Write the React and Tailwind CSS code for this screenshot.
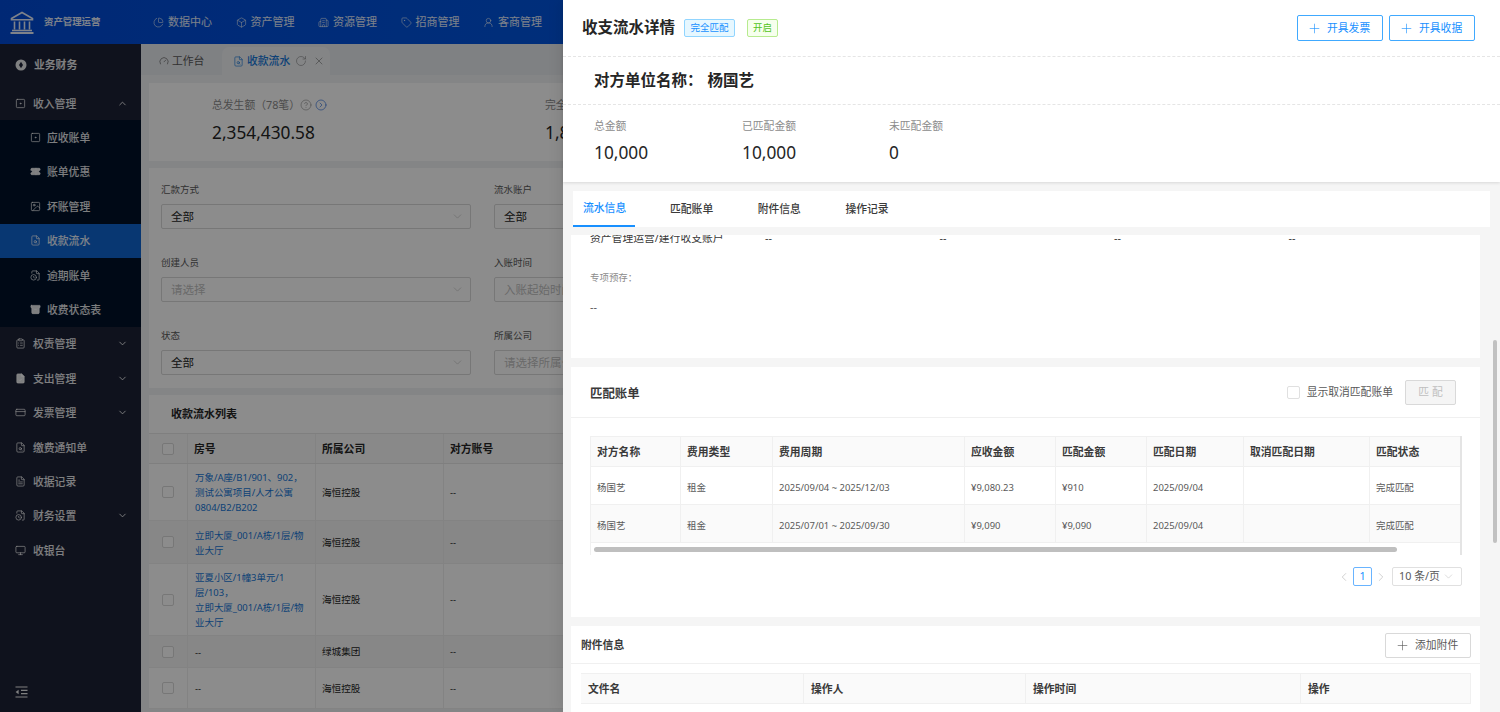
import React from 'react';
import {
  ChartPie, Box, Building2, Tag, UserRound, SquareDot, Ticket, Image as ImageIcon, FileSearch, FileClock, Archive,
  ClipboardList, FileCheck, CreditCard, FileText, Monitor, CircleHelp, CircleChevronRight,
  RotateCw, X, Plus, ChevronUp, ChevronDown, ChevronLeft, ChevronRight, Gauge,
} from 'lucide-react';

const topNav = [
  ['数据中心', ChartPie], ['资产管理', Box], ['资源管理', Building2], ['招商管理', Tag], ['客商管理', UserRound],
];

const Logo = () => (
  <svg width="24" height="24" viewBox="0 0 24 24" fill="none" stroke="currentColor" strokeWidth="1.6">
    <path d="M1.5 8.5 12 2.5l10.5 6v1.2h-21z" />
    <path d="M4.5 11.5v8M9.5 11.5v8M14.5 11.5v8M19.5 11.5v8" />
    <path d="M2 20.5h20" />
    <path d="M0.5 23h23" strokeWidth="2" />
  </svg>
);

const FinanceIcon = ({ className }) => (
  <svg width="12" height="12" viewBox="0 0 12 12" className={className}>
    <circle cx="6" cy="6" r="5.5" fill="currentColor" />
    <path d="M6 2.8 8 6 6 9.2 4 6z" fill="#1d2236" />
  </svg>
);

const CollapseIcon = () => (
  <svg width="13" height="12" viewBox="0 0 13 12" fill="none" stroke="currentColor" strokeWidth="1.2">
    <path d="M0.5 1h12M6 4.3h6.5M6 7.6h6.5M0.5 11h12" />
    <path d="M3.6 3.8v4.4L0.6 6z" fill="currentColor" stroke="none" />
  </svg>
);

function SideRow({ icon: Icon, label, chevron, sub, active, bold, tall, filled }) {
  return (
    <div
      className={`flex items-center ${tall ? 'h-[42px]' : 'h-[34.4px]'} ${sub ? 'pl-[30px]' : 'pl-[15px]'} pr-[13px] ${active ? 'bg-[#1064d0]' : ''} ${bold ? 'font-semibold' : 'font-medium'}`}
    >
      <Icon size={11} strokeWidth={1.6} fill={filled ? 'currentColor' : 'none'} className="shrink-0" />
      <span className={`${sub ? 'ml-[6px]' : 'ml-[7px]'} pt-[1px] text-[10.8px]`}>{label}</span>
      {chevron === 'up' && <ChevronUp size={11} className="ml-auto" />}
      {chevron === 'down' && <ChevronDown size={11} className="ml-auto" />}
    </div>
  );
}

function Sidebar() {
  return (
    <aside className="w-[141px] shrink-0 bg-[#1d2236] text-white/90 flex flex-col relative">
      <SideRow icon={FinanceIcon} label="业务财务" bold tall />
      <SideRow icon={SquareDot} label="收入管理" chevron="up" />
      <div className="bg-[#001129]">
        <SideRow sub icon={SquareDot} label="应收账单" />
        <SideRow sub filled icon={Ticket} label="账单优惠" />
        <SideRow sub icon={ImageIcon} label="坏账管理" />
        <SideRow sub active icon={FileSearch} label="收款流水" />
        <SideRow sub icon={FileClock} label="逾期账单" />
        <SideRow sub filled icon={Archive} label="收费状态表" />
      </div>
      <SideRow icon={ClipboardList} label="权责管理" chevron="down" />
      <SideRow filled icon={FileCheck} label="支出管理" chevron="down" />
      <SideRow icon={CreditCard} label="发票管理" chevron="down" />
      <SideRow icon={FileSearch} label="缴费通知单" />
      <SideRow icon={FileText} label="收据记录" />
      <SideRow icon={FileClock} label="财务设置" chevron="down" />
      <SideRow icon={Monitor} label="收银台" />
      <div className="mt-auto pl-[15px] pb-[14px]">
        <CollapseIcon />
      </div>
    </aside>
  );
}

const Select = ({ value, placeholder }) => (
  <div className="h-[25px] w-[310px] border border-[#d9d9d9] rounded-[2px] bg-white flex items-center pl-[9px] pr-[6px] text-[11.5px]">
    <span className={placeholder ? 'text-[#bfbfbf]' : 'text-[#262626]'}>{value || placeholder}</span>
    <ChevronDown size={13} strokeWidth={1.2} className="ml-auto text-[#bfbfbf]" />
  </div>
);

const Field = ({ label, value, placeholder }) => (
  <div className="w-[310px]">
    <div className="h-[14px] pt-[1px] leading-[14px] text-[9.5px] text-[#595959] mb-[8px]">{label}</div>
    <Select value={value} placeholder={placeholder} />
  </div>
);

const listRows = [
  { h: 'h-[57px]', lines: ['万象/A座/B1/901、902，', '测试公寓项目/人才公寓', '0804/B2/B202'], co: '海恒控股' },
  { h: 'h-[43px]', gray: true, lines: ['立即大厦_001/A栋/1层/物', '业大厅'], co: '海恒控股' },
  { h: 'h-[72px]', lines: ['亚夏小区/1幢3单元/1', '层/103，', '立即大厦_001/A栋/1层/物', '业大厅'], co: '海恒控股' },
  { h: 'h-[32px]', gray: true, plain: true, co: '绿城集团' },
  { h: 'h-[41px]', plain: true, co: '海恒控股' },
];

function Main() {
  return (
    <main className="flex-1 min-w-0 bg-[#f0f2f5] overflow-hidden">
      <div className="h-[31px] bg-[#e8ebef] flex items-end pl-[18px] text-[10.8px] text-[#595959]">
        <div className="h-[28px] flex items-center gap-[3px] w-[63px]">
          <Gauge size={10} strokeWidth={1.5} />
          <span>工作台</span>
        </div>
        <div className="h-[28px] w-[108px] bg-[#f0f2f5] rounded-t-[7px] flex items-center pl-[11px] text-[#1677d8] font-medium">
          <FileSearch size={11} strokeWidth={1.4} />
          <span className="ml-[3px]">收款流水</span>
          <RotateCw size={12} strokeWidth={1.3} className="ml-[5px] text-[#8c8c8c]" />
          <X size={12} strokeWidth={1.5} className="ml-[6px] text-[#8c8c8c]" />
        </div>
      </div>
      <div className="mx-[8px] mt-[8px] h-[78px] bg-white flex pl-[63px] pt-[15px]">
        <div className="w-[333px]">
          <div className="flex items-center h-[14px] text-[10.8px] text-[#8c8c8c]">
            总发生额（78笔）
            <CircleHelp size={12} strokeWidth={1.2} />
            <CircleChevronRight size={12} strokeWidth={1.3} className="ml-[3px] text-[#2f6fdc]" />
          </div>
          <div className="mt-[9px] text-[17.3px] leading-[24px] text-[#262626]">2,354,430.58</div>
        </div>
        <div>
          <div className="h-[14px] leading-[14px] text-[10.8px] text-[#8c8c8c]">完全匹配金额</div>
          <div className="mt-[9px] text-[17.3px] leading-[24px] text-[#262626]">1,854,430.58</div>
        </div>
      </div>
      <div className="mx-[8px] mt-[7px] h-[220px] bg-white pl-[12px] pt-[14px] flex flex-col gap-[26px]">
        <div className="flex gap-[23px]">
          <Field label="汇款方式" value="全部" />
          <Field label="流水账户" value="全部" />
        </div>
        <div className="flex gap-[23px]">
          <Field label="创建人员" placeholder="请选择" />
          <Field label="入账时间" placeholder="入账起始时间" />
        </div>
        <div className="flex gap-[23px]">
          <Field label="状态" value="全部" />
          <Field label="所属公司" placeholder="请选择所属公司" />
        </div>
      </div>
      <div className="mx-[8px] mt-[7px] bg-white">
        <div className="h-[38px] flex items-center pl-[22px] text-[11px] font-semibold text-[#262626]">收款流水列表</div>
        <div className="grid grid-cols-[39px_128px_128px_200px] h-[31px] bg-[#fafafa] border-y border-[#e8e8e8] text-[10.8px] font-semibold text-[#262626]">
          <div className="flex items-center justify-center border-r border-[#eeeeee]">
            <span className="w-[12px] h-[12px] border border-[#d9d9d9] rounded-[2px] bg-white" />
          </div>
          <div className="flex items-center pl-[6px] pt-[1px] border-r border-[#eeeeee]">房号</div>
          <div className="flex items-center pl-[6px] pt-[1px] border-r border-[#eeeeee]">所属公司</div>
          <div className="flex items-center pl-[6px] pt-[1px]">对方账号</div>
        </div>
        {listRows.map((r, i) => (
          <div key={i} className={`grid grid-cols-[39px_128px_128px_200px] ${r.h} border-b border-[#eeeeee] text-[9.45px] text-[#262626] ${r.gray ? 'bg-[#f6f6f6]' : 'bg-white'}`}>
            <div className="flex items-center justify-center border-r border-[#eeeeee]">
              <span className="w-[12px] h-[12px] border border-[#d9d9d9] rounded-[2px] bg-white" />
            </div>
            <div className={`flex flex-col justify-center pl-[7px] pr-[4px] pt-[1px] leading-[15px] border-r border-[#eeeeee] ${r.plain ? 'text-[#262626]' : 'text-[#1677d8]'}`}>
              {r.plain ? <span>--</span> : r.lines.map((l, j) => <span key={j} className="whitespace-nowrap">{l}</span>)}
            </div>
            <div className="flex items-center pl-[6px] pt-[2px] border-r border-[#eeeeee] text-[9.6px]">{r.co}</div>
            <div className="flex items-center pl-[6px] pt-[2px]">--</div>
          </div>
        ))}
      </div>
    </main>
  );
}

const matchCols = ['对方名称', '费用类型', '费用周期', '应收金额', '匹配金额', '匹配日期', '取消匹配日期', '匹配状态'];
const matchRows = [
  ['杨国艺', '租金', '2025/09/04 ~ 2025/12/03', '¥9,080.23', '¥910', '2025/09/04', '', '完成匹配'],
  ['杨国艺', '租金', '2025/07/01 ~ 2025/09/30', '¥9,090', '¥9,090', '2025/09/04', '', '完成匹配'],
];

function MatchTable() {
  const cols = 'grid grid-cols-[90px_92px_192px_91px_91px_97px_126px_92px]';
  return (
    <div className="relative ml-[19px] mr-[18px] mt-[18px] h-[119px] overflow-hidden border-l border-[#f0f0f0]">
      <div className={`${cols} h-[31px] bg-[#fafafa] border-y border-[#f0f0f0] text-[10.8px] font-semibold text-[#3a3a3a]`}>
        {matchCols.map((c, i) => (
          <div key={i} className="flex items-center pl-[6px] pt-[1px] border-r border-[#f0f0f0] whitespace-nowrap">{c}</div>
        ))}
      </div>
      {matchRows.map((r, i) => (
        <div key={i} className={`${cols} h-[38px] border-b border-[#f0f0f0] text-[9.45px] text-[#595959] ${i === 1 ? 'bg-[#fafafa]' : 'bg-white'}`}>
          {r.map((c, j) => (
            <div key={j} className="flex items-center pl-[6px] pt-[5px] border-r border-[#f0f0f0] whitespace-nowrap">{c}</div>
          ))}
        </div>
      ))}
      <div className="absolute right-0 top-0 bottom-0 w-[2px] bg-[#e4e4e4]" />
      <div className="absolute left-[3px] top-[111px] w-[803px] h-[5px] rounded-full bg-[#bfbfbf]" />
    </div>
  );
}

function Drawer() {
  return (
    <section className="absolute right-0 top-0 w-[937px] h-full bg-[#f5f5f5] flex flex-col shadow-[-4px_0_12px_rgba(0,0,0,0.08)]">
      <div className="h-[182px] shrink-0 bg-white shadow-[0_1px_3px_rgba(0,0,0,0.12)]">
        <div className="h-[57px] border-b border-dashed border-[#e5e5e5] flex items-center pl-[19px] pr-[25px]">
          <h1 className="text-[15.5px] font-semibold text-[#262626]">收支流水详情</h1>
          <span className="ml-[9px] h-[18px] w-[51px] flex items-center justify-center rounded-[2px] border border-[#91d5ff] bg-[#e6f7ff] text-[9.5px] text-[#1890ff]">完全匹配</span>
          <span className="ml-[12px] h-[18px] w-[31px] flex items-center justify-center rounded-[2px] border border-[#b7eb8f] bg-[#f6ffed] text-[9.5px] text-[#52c41a]">开启</span>
          <button className="ml-auto h-[26px] w-[86px] flex items-center pl-[9px] gap-[5px] rounded-[2px] border border-[#40a9ff] text-[10.8px] text-[#1890ff]">
            <Plus size={15} strokeWidth={1} />开具发票
          </button>
          <button className="ml-[6px] h-[26px] w-[86px] flex items-center pl-[9px] gap-[5px] rounded-[2px] border border-[#40a9ff] text-[10.8px] text-[#1890ff]">
            <Plus size={15} strokeWidth={1} />开具收据
          </button>
        </div>
        <div className="h-[48px] pt-[1px] border-b border-dashed border-[#e5e5e5] flex items-center pl-[31px] text-[15.5px] font-semibold text-[#262626]">
          <span>对方单位名称：</span>
          <span className="ml-[5px]">杨国艺</span>
        </div>
        <div className="flex pl-[31px] pt-[14px]">
          {[['总金额', '10,000', 'w-[148px]'], ['已匹配金额', '10,000', 'w-[147px]'], ['未匹配金额', '0', 'w-[147px]']].map(([l, v, w]) => (
            <div key={l} className={w}>
              <div className="h-[14px] leading-[14px] text-[10.8px] text-[#8c8c8c]">{l}</div>
              <div className="mt-[7px] text-[17.3px] leading-[26px] text-[#262626]">{v}</div>
            </div>
          ))}
        </div>
      </div>

      <div className="mx-[10px] mt-[9px] h-[36px] shrink-0 bg-white flex text-[10.8px] font-medium text-[#3a3a3a]">
        <div className="w-[62px] pl-[10px] flex items-center border-b-2 border-[#1890ff] text-[#1890ff]">流水信息</div>
        <div className="flex items-center ml-[35px] gap-[44.5px]">
          <span>匹配账单</span><span>附件信息</span><span>操作记录</span>
        </div>
      </div>

      <div className="relative flex-1 min-h-0 mt-[8px] pl-[8px] pr-[20px] overflow-hidden flex flex-col gap-[9px]">
        <div className="h-[123px] shrink-0 bg-white overflow-hidden pl-[19px] text-[10.8px] text-[#3a3a3a]">
          <div className="-mt-[7px] h-[20px] flex items-center">
            <span className="w-[175px] whitespace-nowrap">资产管理运营/建行收支账户</span>
            <span className="w-[174.5px]">--</span>
            <span className="w-[174.5px]">--</span>
            <span className="w-[174.5px]">--</span>
            <span>--</span>
          </div>
          <div className="mt-[23px] h-[14px] leading-[14px] text-[9.45px] text-[#8c8c8c]">专项预存：</div>
          <div className="mt-[15px] h-[14px] leading-[14px] text-[#595959]">--</div>
        </div>

        <div className="h-[250px] shrink-0 bg-white">
          <div className="h-[51px] border-b border-[#f0f0f0] flex items-center pl-[19px] pr-[24px]">
            <span className="pt-[4px] text-[12.4px] font-semibold text-[#3a3a3a]">匹配账单</span>
            <span className="ml-auto w-[13px] h-[13px] border border-[#e0e0e0] rounded-[2px]" />
            <span className="ml-[7px] text-[10.8px] text-[#595959]">显示取消匹配账单</span>
            <button className="ml-[12px] h-[25px] w-[51px] rounded-[2px] border border-[#d9d9d9] bg-[#f5f5f5] text-[10.8px] text-[#bfbfbf]">匹 配</button>
          </div>
          <MatchTable />
          <div className="mt-[12px] pr-[18px] flex items-center justify-end text-[#bfbfbf]">
            <ChevronLeft size={14} strokeWidth={1.2} />
            <span className="ml-[2px] w-[19px] h-[19px] flex items-center justify-center border border-[#69b4ff] rounded-[2px] text-[10.8px] text-[#1890ff]">1</span>
            <ChevronRight size={14} strokeWidth={1.2} className="ml-[2px]" />
            <span className="ml-[4px] w-[70px] h-[19px] flex items-center pl-[6px] pr-[6px] border border-[#e0e0e0] rounded-[2px] text-[10.8px] text-[#595959]">
              10 条/页
              <ChevronDown size={13} strokeWidth={1} className="ml-auto text-[#bfbfbf]" />
            </span>
          </div>
        </div>

        <div className="shrink-0 bg-white">
          <div className="h-[38px] border-b border-[#f0f0f0] flex items-center pl-[10px] pr-[9px]">
            <span className="pt-[2px] text-[10.8px] font-semibold text-[#3a3a3a]">附件信息</span>
            <button className="mt-[1px] ml-auto h-[25px] w-[86px] flex items-center pl-[9px] gap-[5px] rounded-[2px] border border-[#d9d9d9] text-[10.8px] text-[#595959]">
              <Plus size={15} strokeWidth={1} />添加附件
            </button>
          </div>
          <div className="mx-[10px] mt-[9px] mr-[9px] grid grid-cols-[223px_222px_275px_170px] h-[31px] bg-[#fafafa] border-y border-[#f0f0f0] text-[10.8px] font-semibold text-[#3a3a3a]">
            {['文件名', '操作人', '操作时间', '操作'].map((c) => (
              <div key={c} className="flex items-center pl-[7px] pt-[1px] border-r border-[#f0f0f0]">{c}</div>
            ))}
          </div>
          <div className="h-[40px]" />
        </div>
      </div>

      <div className="absolute right-[3px] top-[340px] w-[4px] h-[203px] rounded-full bg-[#c1c1c1]" />
    </section>
  );
}

export default function App() {
  return (
    <div className="relative w-[1500px] h-[712px] overflow-hidden font-['Noto_Sans','Noto_Sans_CJK_SC',sans-serif]">
      <div className="h-full flex flex-col">
        <header className="h-[44px] shrink-0 bg-[linear-gradient(90deg,#004ad6,#0068f0)] text-white/90 flex items-center">
          <div className="w-[153px] shrink-0 flex items-center pl-[10px]">
            <Logo />
            <span className="ml-[10px] text-[9.4px] font-semibold">资产管理运营</span>
          </div>
          <nav className="flex">
            {topNav.map(([label, Icon]) => (
              <div key={label} className="w-[82.5px] flex items-center text-[11px]">
                <Icon size={11} strokeWidth={1.3} className="shrink-0" />
                <span className="ml-[4px]">{label}</span>
              </div>
            ))}
          </nav>
        </header>
        <div className="flex-1 min-h-0 flex">
          <Sidebar />
          <Main />
        </div>
      </div>
      <div className="absolute inset-0 bg-black/45" />
      <Drawer />
    </div>
  );
}
